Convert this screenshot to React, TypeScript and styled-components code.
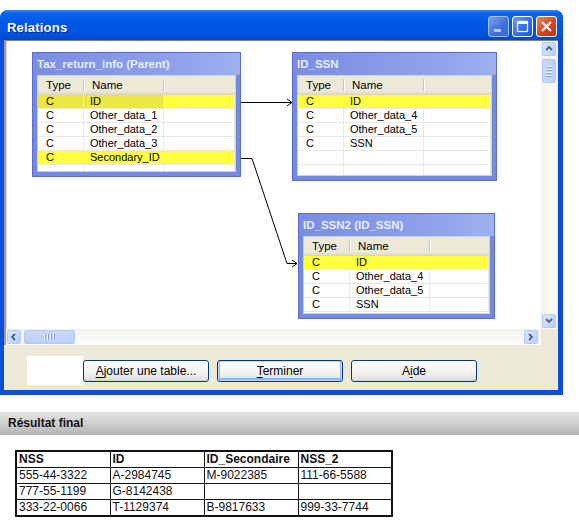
import React from 'react';
import styled, { createGlobalStyle, css } from 'styled-components';

const GlobalStyle = createGlobalStyle`
  html, body {
    margin: 0;
    padding: 0;
    background: #ffffff;
  }
  body {
    font-family: "Liberation Sans", Arial, sans-serif;
  }
`;

const Page = styled.div`
  width: 579px;
  height: 525px;
  overflow: hidden;
  padding-top: 10px;
  box-sizing: border-box;
`;

const Window = styled.div`
  width: 563px;
  background: #0a4fd6;
  border-radius: 8px 8px 0 0;
  overflow: hidden;
`;

const TitleBar = styled.div`
  height: 30px;
  display: flex;
  align-items: center;
  justify-content: space-between;
  padding: 0 6px 0 7px;
  background: linear-gradient(#3c8cff 0, #0b63ec 3px, #0058e6 40%, #0054e0 80%, #0047cc 100%);
`;

const Title = styled.div`
  color: #ffffff;
  font-weight: bold;
  font-size: 13px;
  padding-top: 4px;
  text-shadow: 1px 1px 0 #0a2a8a;
  letter-spacing: 0.2px;
`;

const TitleButtons = styled.div`
  display: flex;
  gap: 3px;
  margin-top: 3px;
`;

const CaptionButton = styled.div<{ $kind: 'min' | 'max' | 'close' }>`
  width: 19px;
  height: 19px;
  border: 1px solid #ffffff;
  border-radius: 3px;
  position: relative;
  display: flex;
  align-items: center;
  justify-content: center;
  ${p =>
    p.$kind === 'close'
      ? css`
          background: linear-gradient(135deg, #e8815f, #d9401c 60%, #c2330f);
        `
      : p.$kind === 'min'
      ? css`
          background: linear-gradient(135deg, #7d9ff0, #3f6fe0 60%, #3a66d6);
          border-color: #a7bff5;
        `
      : css`
          background: linear-gradient(135deg, #6d9cff, #2c68f0 60%, #1f58e0);
        `}
`;

const Body = styled.div`
  padding: 0 5px 5px 4px;
`;

const Client = styled.div`
  background: #ece9d8;
  height: 350px;
  display: flex;
  flex-direction: column;
`;

const ViewFrame = styled.div`
  border-top: 1px solid #808080;
  border-left: 2px solid #9a9a9a;
  display: flex;
  flex-direction: column;
`;

const ViewRow = styled.div`
  display: flex;
  height: 288px;
`;

const Diagram = styled.div`
  position: relative;
  width: 535px;
  background: #ffffff;
  border-left: 1px solid #d8d6cc;
  box-sizing: border-box;
  overflow: hidden;
`;

const VScroll = styled.div`
  width: 16px;
  background: linear-gradient(to right, #f3f2ec, #fdfdfb);
  display: flex;
  flex-direction: column;
  padding: 1px 0;
  box-sizing: border-box;
`;

const ScrollBtn = styled.div`
  width: 14px;
  height: 14px;
  margin: 0 1px;
  border: 1px solid #b4c8f6;
  border-radius: 2px;
  box-sizing: border-box;
  background: linear-gradient(135deg, #dce7ff, #b9cdfa);
  display: flex;
  align-items: center;
  justify-content: center;
`;

const VThumb = styled.div`
  width: 14px;
  height: 24px;
  margin: 3px 1px 0;
  border: 1px solid #b4c8f6;
  border-radius: 2px;
  box-sizing: border-box;
  background: linear-gradient(to right, #c9d8fc, #bccffa);
  display: flex;
  flex-direction: column;
  align-items: center;
  justify-content: center;
  gap: 1px;
`;

const Grip = styled.span<{ $vertical?: boolean }>`
  display: block;
  background: #eef3ff;
  border-bottom: 1px solid #8ca6e6;
  ${p =>
    p.$vertical
      ? css`
          width: 1px;
          height: 6px;
          border-bottom: none;
          border-right: 1px solid #8ca6e6;
        `
      : css`
          width: 6px;
          height: 1px;
        `}
`;

const Spacer = styled.div`
  flex: 1;
`;

const HScrollRow = styled.div`
  display: flex;
  height: 16px;
`;

const HScroll = styled.div`
  width: 535px;
  display: flex;
  align-items: center;
  background: linear-gradient(#f3f2ec, #fdfdfb);
  padding: 0 2px 0 0;
  box-sizing: border-box;
`;

const HThumb = styled.div`
  width: 51px;
  height: 14px;
  margin-left: 2px;
  border: 1px solid #b4c8f6;
  border-radius: 2px;
  box-sizing: border-box;
  background: linear-gradient(#c9d8fc, #bccffa);
  display: flex;
  align-items: center;
  justify-content: center;
  gap: 1px;
`;

const Corner = styled.div`
  flex: 1;
  background: #ece9d8;
`;

const ButtonRow = styled.div`
  flex: 1;
  display: flex;
  align-items: flex-start;
  padding: 11px 0 0 23px;
`;

const BlankBox = styled.div`
  width: 56px;
  height: 29px;
  background: #ffffff;
`;

const DialogButton = styled.div<{ $default?: boolean }>`
  width: 126px;
  height: 22px;
  margin-top: 4px;
  margin-right: 8px;
  box-sizing: border-box;
  border: 1px solid #003c74;
  border-radius: 3px;
  background: linear-gradient(#ffffff, #f4f3ee 60%, #e3e0d4 90%, #d6d0c5);
  font-size: 12px;
  color: #000000;
  display: flex;
  align-items: center;
  justify-content: center;
  ${p =>
    p.$default &&
    css`
      box-shadow: inset 0 0 0 1px #c2d5fc, inset 0 -1px 0 2px #95b6f4;
    `}
  u {
    text-decoration: underline;
    text-underline-offset: 2px;
  }
`;

/* tables drawn on the diagram canvas */

const TableWin = styled.div<{ $x: number; $y: number; $w: number; $h: number }>`
  position: absolute;
  left: ${p => p.$x}px;
  top: ${p => p.$y}px;
  width: ${p => p.$w}px;
  height: ${p => p.$h}px;
  box-sizing: border-box;
  border: 1px solid #5a6cd2;
  background: #7489e0;
  padding: 0 4px 4px;
  display: flex;
  flex-direction: column;
`;

const TableTitle = styled.div`
  height: 22px;
  flex-shrink: 0;
  margin: 0 -4px;
  padding-left: 4px;
  background: linear-gradient(to right, #7a8de1, #8fa2ea 70%, #9fb1ef);
  color: #e8edff;
  font-weight: bold;
  font-size: 11.5px;
  line-height: 22px;
  white-space: nowrap;
  overflow: hidden;
`;

const Grid = styled.div`
  flex: 1;
  background: #ffffff;
  border: 1px solid #c8d0f0;
  overflow: hidden;
  font-size: 11px;
`;

const GridHeader = styled.div`
  display: grid;
  grid-template-columns: 46px 80px 1fr;
  height: 19px;
  box-sizing: border-box;
  background: #ece9d8;
  border-bottom: 1px solid #d8d4c4;
  box-shadow: inset 0 -2px 0 #e2dfd0;
  font-size: 11.5px;
`;

const HeaderCell = styled.div`
  position: relative;
  padding-left: 8px;
  line-height: 18px;
  &::after {
    content: '';
    position: absolute;
    right: 0;
    top: 3px;
    bottom: 3px;
    width: 1px;
    background: #c7c4b2;
    box-shadow: 1px 0 0 #ffffff;
  }
`;

const GridRow = styled.div<{ $hl?: boolean; $sel?: boolean }>`
  display: grid;
  grid-template-columns: 46px 80px 1fr;
  height: 14px;
  box-sizing: border-box;
  border-bottom: 1px solid #ece9dc;
  background: ${p => (p.$hl ? '#ffff40' : '#ffffff')};
  & > div:nth-child(-n + 2) {
    background: ${p => (p.$sel ? '#ebe845' : 'transparent')};
  }
`;

const Cell = styled.div<{ $pad?: number }>`
  line-height: 13px;
  padding-left: ${p => p.$pad ?? 8}px;
  border-right: 1px solid #ece9dc;
  white-space: nowrap;
  overflow: hidden;
`;

const Links = styled.svg`
  position: absolute;
  left: 0;
  top: 0;
  pointer-events: none;
`;

/* result section */

const ResultBar = styled.div`
  margin-top: 17px;
  height: 23px;
  background: linear-gradient(#e4e4e4, #cfcfcf 50%, #b3b3b3);
  font-weight: bold;
  font-size: 12px;
  color: #111111;
  line-height: 23px;
  padding-left: 8px;
`;

const ResultTable = styled.table`
  margin: 15px 0 0 15px;
  border-collapse: collapse;
  border: 2px solid #111111;
  font-size: 12px;
  color: #111111;
  td,
  th {
    border: 1px solid #111111;
    width: 94px;
    height: 16px;
    padding: 0 2px;
    text-align: left;
    line-height: 15px;
    box-sizing: border-box;
  }
  th {
    font-weight: bold;
  }
`;

type Field = { name: string; hl?: boolean; sel?: boolean };

const DiagramTable = ({
  title,
  fields,
  x,
  y,
  w,
  h,
}: {
  title: string;
  fields: Field[];
  x: number;
  y: number;
  w: number;
  h: number;
}) => (
  <TableWin $x={x} $y={y} $w={w} $h={h}>
    <TableTitle>{title}</TableTitle>
    <Grid>
      <GridHeader>
        <HeaderCell>Type</HeaderCell>
        <HeaderCell>Name</HeaderCell>
        <div />
      </GridHeader>
      {fields.map((f, i) => (
        <GridRow key={i} $hl={f.hl} $sel={f.sel}>
          <Cell>{f.name ? 'C' : ''}</Cell>
          <Cell $pad={6}>{f.name}</Cell>
          <Cell />
        </GridRow>
      ))}
    </Grid>
  </TableWin>
);

const Chevron = ({ dir }: { dir: 'up' | 'down' | 'left' | 'right' }) => {
  const d = {
    up: 'M1 5 L4 2 L7 5',
    down: 'M1 2 L4 5 L7 2',
    left: 'M5 1 L2 4 L5 7',
    right: 'M2 1 L5 4 L2 7',
  }[dir];
  return (
    <svg width="8" height="8" viewBox="0 0 8 8">
      <path d={d} fill="none" stroke="#4d6185" strokeWidth="1.8" />
    </svg>
  );
};

const parent: Field[] = [
  { name: 'ID', hl: true, sel: true },
  { name: 'Other_data_1' },
  { name: 'Other_data_2' },
  { name: 'Other_data_3' },
  { name: 'Secondary_ID', hl: true },
  { name: '' },
];

const ssn: Field[] = [
  { name: 'ID', hl: true },
  { name: 'Other_data_4' },
  { name: 'Other_data_5' },
  { name: 'SSN' },
  { name: '' },
  { name: '' },
];

const ssn2: Field[] = [
  { name: 'ID', hl: true },
  { name: 'Other_data_4' },
  { name: 'Other_data_5' },
  { name: 'SSN' },
];

const results = [
  ['555-44-3322', 'A-2984745', 'M-9022385', '111-66-5588'],
  ['777-55-1199', 'G-8142438', '', ''],
  ['333-22-0066', 'T-1129374', 'B-9817633', '999-33-7744'],
];

const App = () => {
  return (
    <Page>
      <GlobalStyle />
      <Window>
        <TitleBar>
          <Title>Relations</Title>
          <TitleButtons>
            <CaptionButton $kind="min">
              <svg width="19" height="19" viewBox="0 0 19 19">
                <rect x="5" y="12" width="7" height="3" fill="#b9c8ec" />
              </svg>
            </CaptionButton>
            <CaptionButton $kind="max">
              <svg width="19" height="19" viewBox="0 0 19 19">
                <rect x="4.5" y="4.5" width="10" height="10" fill="none" stroke="#fff" strokeWidth="1.3" />
                <rect x="4" y="4" width="11" height="3" fill="#fff" />
              </svg>
            </CaptionButton>
            <CaptionButton $kind="close">
              <svg width="19" height="19" viewBox="0 0 19 19">
                <path d="M5 5 L14 14 M14 5 L5 14" stroke="#fff" strokeWidth="2.2" />
              </svg>
            </CaptionButton>
          </TitleButtons>
        </TitleBar>
        <Body>
          <Client>
            <ViewFrame>
              <ViewRow>
                <Diagram>
                  <DiagramTable title="Tax_return_info (Parent)" fields={parent} x={25} y={11} w={209} h={125} />
                  <DiagramTable title="ID_SSN" fields={ssn} x={285} y={11} w={205} h={129} />
                  <DiagramTable title="ID_SSN2 (ID_SSN)" fields={ssn2} x={291} y={172} w={197} h={106} />
                  <Links width="535" height="288">
                    <g fill="none" stroke="#000" strokeWidth="1">
                      <path d="M234 61.5 H285" />
                      <path d="M280 58 L285 61.5 L280 65" />
                      <path d="M234 117.5 H245 L280 222.5 H290" />
                      <path d="M285 219 L290 222.5 L285 226" />
                    </g>
                  </Links>
                </Diagram>
                <VScroll>
                  <ScrollBtn>
                    <Chevron dir="up" />
                  </ScrollBtn>
                  <VThumb>
                    <Grip />
                    <Grip />
                    <Grip />
                    <Grip />
                  </VThumb>
                  <Spacer />
                  <ScrollBtn>
                    <Chevron dir="down" />
                  </ScrollBtn>
                </VScroll>
              </ViewRow>
              <HScrollRow>
                <HScroll>
                  <ScrollBtn>
                    <Chevron dir="left" />
                  </ScrollBtn>
                  <HThumb>
                    <Grip $vertical />
                    <Grip $vertical />
                    <Grip $vertical />
                    <Grip $vertical />
                  </HThumb>
                  <Spacer />
                  <ScrollBtn>
                    <Chevron dir="right" />
                  </ScrollBtn>
                </HScroll>
                <Corner />
              </HScrollRow>
            </ViewFrame>
            <ButtonRow>
              <BlankBox />
              <DialogButton>
                <span>
                  <u>A</u>jouter une table...
                </span>
              </DialogButton>
              <DialogButton $default>
                <span>
                  <u>T</u>erminer
                </span>
              </DialogButton>
              <DialogButton>
                <span>
                  A<u>i</u>de
                </span>
              </DialogButton>
            </ButtonRow>
          </Client>
        </Body>
      </Window>
      <ResultBar>Résultat final</ResultBar>
      <ResultTable>
        <thead>
          <tr>
            <th>NSS</th>
            <th>ID</th>
            <th>ID_Secondaire</th>
            <th>NSS_2</th>
          </tr>
        </thead>
        <tbody>
          {results.map((r, i) => (
            <tr key={i}>
              {r.map((c, j) => (
                <td key={j}>{c}</td>
              ))}
            </tr>
          ))}
        </tbody>
      </ResultTable>
    </Page>
  );
};

export default App;
